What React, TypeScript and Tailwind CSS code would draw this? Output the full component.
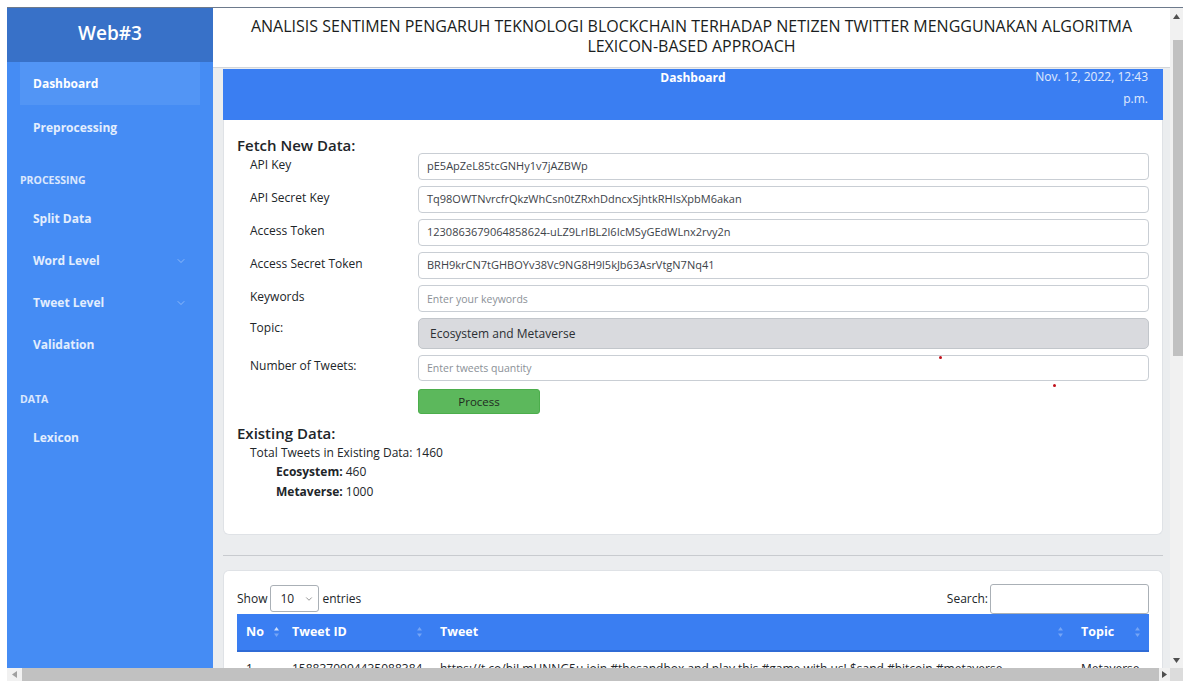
import { ChevronDown } from 'lucide-react'

const credentials = [
  { label: 'API Key', value: 'pE5ApZeL85tcGNHy1v7jAZBWp' },
  { label: 'API Secret Key', value: 'Tq98OWTNvrcfrQkzWhCsn0tZRxhDdncxSjhtkRHIsXpbM6akan' },
  { label: 'Access Token', value: '1230863679064858624-uLZ9LrIBL2l6IcMSyGEdWLnx2rvy2n' },
  { label: 'Access Secret Token', value: 'BRH9krCN7tGHBOYv38Vc9NG8H9l5kJb63AsrVtgN7Nq41' },
]

function SortIcon({ active = false }: { active?: boolean }) {
  return (
    <svg width="7" height="12" viewBox="0 0 7 12" className="shrink-0">
      <path d="M3.5 1 L6 4.5 H1 Z" fill="#ffffff" opacity={active ? 0.75 : 0.3} />
      <path d="M3.5 11 L6 7.5 H1 Z" fill="#ffffff" opacity={0.3} />
    </svg>
  )
}

function NavItem({ label, active = false, caret = false }: { label: string; active?: boolean; caret?: boolean }) {
  return (
    <div
      className={`mx-[13px] flex items-center justify-between px-[13px] text-[12px] font-bold text-white ${
        active ? 'h-[43px] bg-[#5295f5]' : 'h-[42px] text-white/85'
      }`}
    >
      <span>{label}</span>
      {caret && <ChevronDown size={12} strokeWidth={1.5} className="text-white/50" />}
    </div>
  )
}

function NavHeading({ label, top }: { label: string; top: string }) {
  return (
    <div className={`px-[13px] ${top} pb-[11px] text-[10.5px] leading-[14px] font-bold uppercase text-white/80`}>
      {label}
    </div>
  )
}

function Sidebar() {
  return (
    <aside className="w-[206px] shrink-0 bg-[#458cf4]">
      <div className="flex h-[54px] items-center justify-center bg-[#3871c8] pb-[4px] text-[19px] font-semibold text-white">
        Web#3
      </div>
      <NavItem label="Dashboard" active />
      <div className="h-[2px]" />
      <NavItem label="Preprocessing" />
      <NavHeading label="Processing" top="pt-[24px]" />
      <NavItem label="Split Data" />
      <NavItem label="Word Level" caret />
      <NavItem label="Tweet Level" caret />
      <NavItem label="Validation" />
      <NavHeading label="Data" top="pt-[26px]" />
      <NavItem label="Lexicon" />
    </aside>
  )
}

const labelCls = 'w-[181px] shrink-0 pl-[13px] text-[12px] leading-[18px] text-[#212529]'

function FetchCard() {
  return (
    <div className="rounded-b-[6px] border border-t-0 border-[#dfe2e6] bg-white px-[13px] pt-[16px] pb-[32px]">
      <h2 className="text-[15px] leading-[19px] font-semibold text-[#212529]">Fetch New Data:</h2>

      <div className="relative mt-[-2px]">
        {credentials.map((c) => (
          <div key={c.label} className="mb-[6px] flex">
            <div className={`${labelCls} pt-[3px]`}>{c.label}</div>
            <div className="flex h-[27px] flex-1 items-center rounded-[4px] border border-[#c9ced4] px-[8px] text-[11px] text-[#3d4349]">
              {c.value}
            </div>
          </div>
        ))}

        <div className="mb-[6px] flex">
          <div className={`${labelCls} pt-[3px]`}>Keywords</div>
          <input
            placeholder="Enter your keywords"
            className="h-[27px] flex-1 rounded-[4px] border border-[#c9ced4] px-[8px] text-[10.5px] outline-none placeholder:text-[#8b9197]"
          />
        </div>

        <div className="mb-[6px] flex">
          <div className={`${labelCls} pt-[1px]`}>Topic:</div>
          <div className="flex h-[31px] flex-1 items-center rounded-[5px] border border-[#c2c6cb] bg-[#d9dade] px-[11px] text-[12px] text-[#2b2f33]">
            Ecosystem and Metaverse
          </div>
        </div>

        <div className="flex">
          <div className={`${labelCls} pt-[2px]`}>Number of Tweets:</div>
          <input
            placeholder="Enter tweets quantity"
            className="h-[26px] flex-1 rounded-[4px] border border-[#c9ced4] px-[8px] text-[10.5px] outline-none placeholder:text-[#8b9197]"
          />
        </div>

        <div className="mt-[7px] pl-[181px]">
          <button className="h-[25px] w-[122px] rounded-[3px] border border-[#4cae4c] bg-[#5cb85c] text-[11.5px] text-[#1f2a1f]">
            Process
          </button>
        </div>

        {/* stray marks */}
        <span className="absolute left-[702px] top-[203px] h-[3px] w-[3px] rounded-full bg-[#c0101a]" />
        <span className="absolute left-[816px] top-[231px] h-[3px] w-[3px] rounded-full bg-[#c0101a]" />
      </div>

      <h2 className="mt-[9px] text-[15px] leading-[20px] font-semibold text-[#212529]">Existing Data:</h2>
      <div className="pl-[13px] text-[12px] leading-[19px] text-[#212529]">
        <div>Total Tweets in Existing Data: 1460</div>
        <div className="pl-[26px] leading-[20px]">
          <div>
            <span className="font-bold">Ecosystem:</span> 460
          </div>
          <div>
            <span className="font-bold">Metaverse:</span> 1000
          </div>
        </div>
      </div>
    </div>
  )
}

function TweetsCard() {
  return (
    <div className="rounded-t-[6px] border border-b-0 border-[#dfe2e6] bg-white px-[13px] pt-[12px]">
      <div className="flex h-[31px] items-center justify-between text-[12px] text-[#212529]">
        <div className="flex items-center gap-[3px]">
          <span>Show</span>
          <div className="flex h-[27px] w-[49px] items-center justify-between rounded-[3px] border border-[#aab0b6] pl-[9px] pr-[4px]">
            <span>10</span>
            <ChevronDown size={10} strokeWidth={1.5} className="text-[#555]" />
          </div>
          <span>entries</span>
        </div>
        <div className="flex items-center gap-[2px]">
          <span>Search:</span>
          <div className="h-[30px] w-[159px] rounded-[3px] border border-[#aab0b6]" />
        </div>
      </div>

      <table className="w-full table-fixed border-collapse text-[12px]">
        <thead>
          <tr className="h-[37px] border-b-2 border-[#2f6bd6] bg-[#3a7ef2] text-left text-[12.5px] font-bold text-white">
            <th className="w-[46px] pl-[9px]">
              <div className="flex items-center justify-between pr-[3px]">
                No <SortIcon active />
              </div>
            </th>
            <th className="w-[148px] pl-[9px]">
              <div className="flex items-center justify-between pr-[8px]">
                Tweet ID <SortIcon />
              </div>
            </th>
            <th className="pl-[9px]">
              <div className="flex items-center justify-between pr-[8px]">
                Tweet <SortIcon />
              </div>
            </th>
            <th className="w-[77px] pl-[9px]">
              <div className="flex items-center justify-between pr-[8px]">
                Topic <SortIcon />
              </div>
            </th>
          </tr>
        </thead>
        <tbody>
          <tr className="h-[34px] text-[#212529]">
            <td className="pl-[9px]">1</td>
            <td className="pl-[9px]">1588370994435088384</td>
            <td className="truncate pl-[9px]">
              https://t.co/biLmHNNG5u join #thesandbox and play this #game with us! $sand #bitcoin #metaverse
            </td>
            <td className="pl-[9px]">Metaverse</td>
          </tr>
        </tbody>
      </table>
    </div>
  )
}

export default function App() {
  return (
    <div className="h-[681px] w-[1183px] overflow-hidden bg-white pt-[7px] pl-[7px] font-['Segoe_UI','Open_Sans',sans-serif]">
      <div className="flex h-[674px] flex-col border-t border-[#6d7a8c]">
        <div className="flex min-h-0 flex-1">
          <Sidebar />

          <main className="relative flex min-w-0 flex-1 flex-col overflow-hidden bg-[#ebedef]">
            <header className="h-[60px] shrink-0 border-b border-[#d3d6da] bg-white pt-[8px] text-center text-[16px] leading-[20px] text-[#1a1d20]">
              ANALISIS SENTIMEN PENGARUH TEKNOLOGI BLOCKCHAIN TERHADAP NETIZEN TWITTER MENGGUNAKAN ALGORITMA
              <br />
              LEXICON-BASED APPROACH
            </header>

            <div className="pl-[10px] pr-[7px] pt-[1px]">
              <div className="flex h-[51px] bg-[#3a7ef2] text-white">
                <div className="flex-1" />
                <div className="pt-[1px] text-[12px] leading-[16px] font-bold">Dashboard</div>
                <div className="flex flex-1 justify-end">
                  <div className="-mt-[3px] pr-[15px] text-right text-[12px] leading-[22px] text-white/85">
                    Nov. 12, 2022, 12:43
                    <br />
                    p.m.
                  </div>
                </div>
              </div>

              <FetchCard />

              <div className="mt-[20px] h-px bg-[#c8cbcf]" />

              <div className="mt-[14px]">
                <TweetsCard />
              </div>
            </div>
          </main>

          {/* vertical scrollbar */}
          <div className="flex w-[13px] shrink-0 flex-col items-center bg-[#f1f1f1]">
            <svg width="7" height="5" viewBox="0 0 7 5" className="mt-[6px]">
              <path d="M3.5 0 L7 5 H0 Z" fill="#505050" />
            </svg>
            <div className="mt-[21px] h-[316px] w-[10px] self-end bg-[#c1c1c1]" />
            <div className="flex-1" />
            <svg width="7" height="5" viewBox="0 0 7 5" className="mb-[5px]">
              <path d="M0 0 H7 L3.5 5 Z" fill="#505050" />
            </svg>
          </div>
        </div>

        {/* horizontal scrollbar */}
        <div className="flex h-[13px] shrink-0">
          <div className="flex flex-1 items-center bg-[#f1f1f1]">
            <svg width="5" height="7" viewBox="0 0 5 7" className="ml-[5px]">
              <path d="M5 0 V7 L0 3.5 Z" fill="#a0a0a0" />
            </svg>
            <div className="ml-[5px] h-[13px] flex-1 bg-[#c1c1c1]" />
            <svg width="5" height="7" viewBox="0 0 5 7" className="mx-[3px]">
              <path d="M0 0 V7 L5 3.5 Z" fill="#505050" />
            </svg>
          </div>
          <div className="w-[13px] bg-[#dcdcdc]" />
        </div>
      </div>
    </div>
  )
}
